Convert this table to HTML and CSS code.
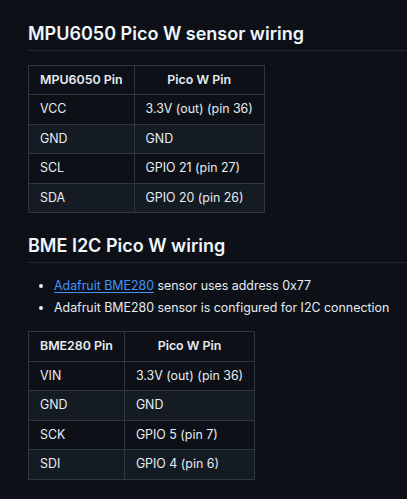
FILE: index.html
```html
<!DOCTYPE html>
<html lang="en">
<head>
<meta charset="utf-8">
<title>Wiring</title>
<link rel="stylesheet" href="styles.css">
</head>
<body>
<article class="markdown">
  <h2 class="heading first">MPU6050 Pico W sensor wiring</h2>
  <table class="pins">
    <thead>
      <tr><th>MPU6050 Pin</th><th>Pico W Pin</th></tr>
    </thead>
    <tbody>
      <tr><td>VCC</td><td>3.3V (out) (pin 36)</td></tr>
      <tr><td>GND</td><td>GND</td></tr>
      <tr><td>SCL</td><td>GPIO 21 (pin 27)</td></tr>
      <tr><td>SDA</td><td>GPIO 20 (pin 26)</td></tr>
    </tbody>
  </table>

  <h2 class="heading">BME I2C Pico W wiring</h2>
  <ul class="notes">
    <li><a href="#" class="link">Adafruit BME280</a> sensor uses address 0x77</li>
    <li>Adafruit BME280 sensor is configured for I2C connection</li>
  </ul>
  <table class="pins">
    <thead>
      <tr><th>BME280 Pin</th><th>Pico W Pin</th></tr>
    </thead>
    <tbody>
      <tr><td>VIN</td><td>3.3V (out) (pin 36)</td></tr>
      <tr><td>GND</td><td>GND</td></tr>
      <tr><td>SCK</td><td>GPIO 5 (pin 7)</td></tr>
      <tr><td>SDI</td><td>GPIO 4 (pin 6)</td></tr>
    </tbody>
  </table>
</article>
</body>
</html>
```

FILE: styles.css
```css
html, body {
  margin: 0;
  padding: 0;
  background: #0d1117;
}

body {
  color: #e6edf3;
  font-family: Inter, "Noto Sans", "Liberation Sans", sans-serif;
  font-size: 12.4px;
  line-height: 18.5px;
}

.markdown {
  padding: 0 0 0 28px;
}

.heading {
  margin: 21.5px 0 14px;
  padding-bottom: 4.5px;
  font-size: 18px;
  line-height: 22.5px;
  font-weight: 600;
  color: #f0f6fc;
  border-bottom: 1px solid #21262d;
}

.heading.first {
  margin-top: 22.5px;
}

.pins {
  border-collapse: collapse;
  border-spacing: 0;
  margin: 0 0 14px;
}

.heading + .pins {
  margin-top: 13.5px;
}

.pins th,
.pins td {
  border: 1px solid #30363d;
  padding: 5px 11px;
  line-height: 18.5px;
}

.pins th {
  font-weight: 600;
  text-align: center;
}

.pins td {
  text-align: left;
}

.pins tbody tr:nth-child(2n) {
  background: #151b23;
}

.notes {
  margin: 0 0 14px;
  padding-left: 26px;
}

.notes li + li {
  margin-top: 3.5px;
}

.link {
  color: #4493f8;
  text-decoration: underline;
  text-underline-offset: 2px;
}
```
